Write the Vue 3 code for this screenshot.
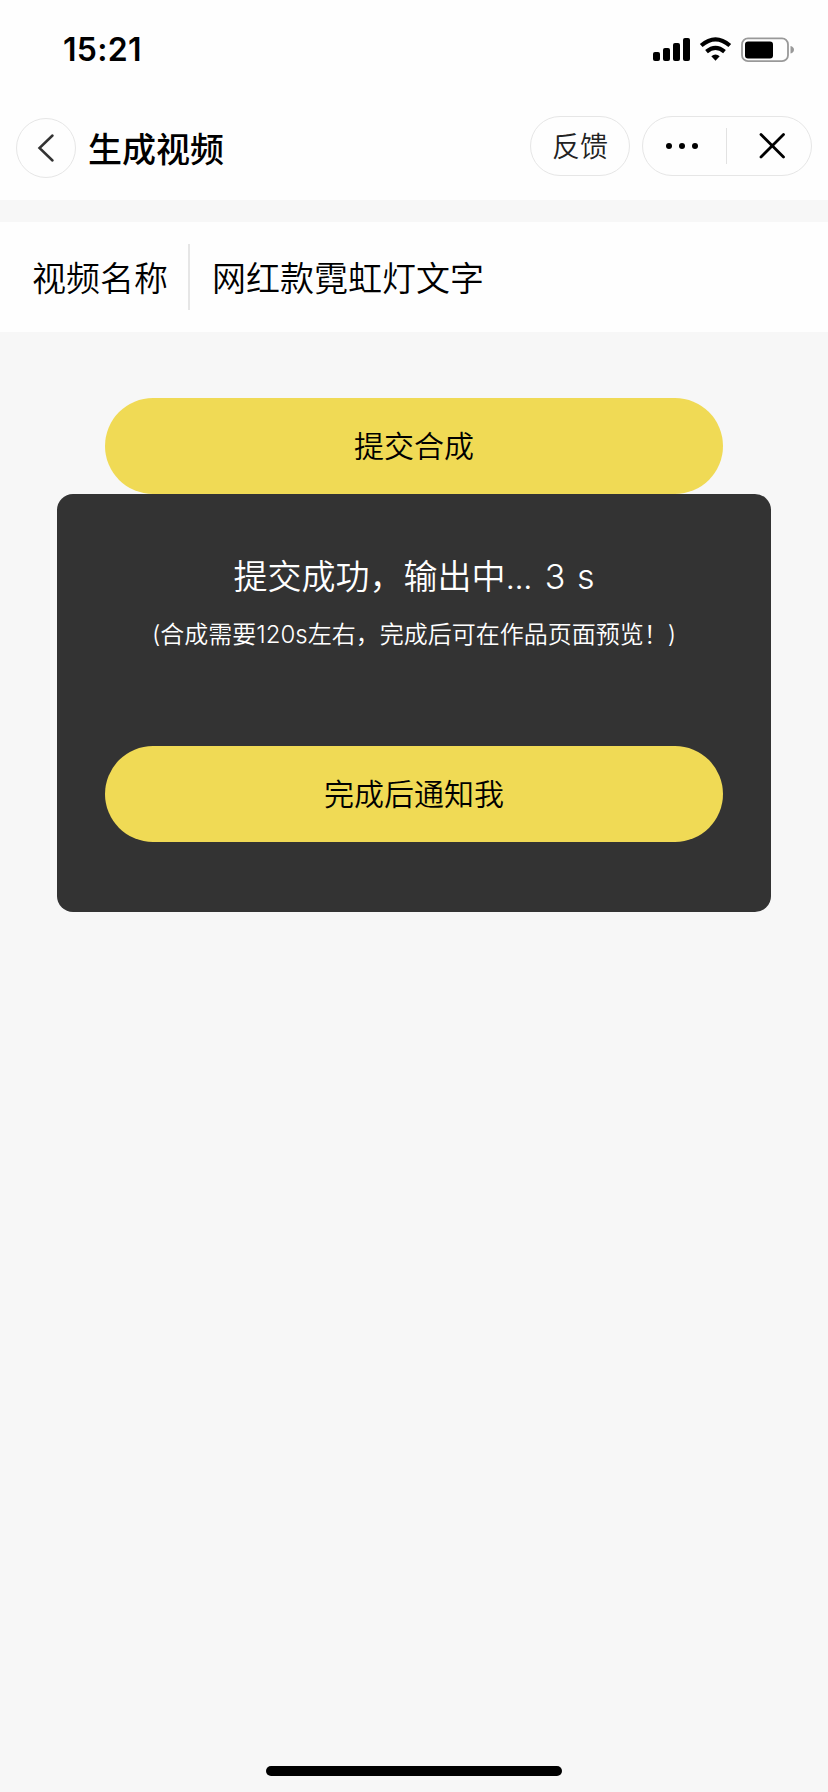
<script setup>
import { ref } from 'vue'

const videoName = ref('网红款霓虹灯文字')
const seconds = ref(3)
</script>

<template>
  <div class="screen">
    <header class="top">
      <div class="status">
        <span class="time">15:21</span>
        <svg class="indicators" width="144" height="26" viewBox="0 0 144 26">
          <rect x="1" y="15" width="7" height="9" rx="2" />
          <rect x="11" y="11" width="7" height="13" rx="2" />
          <rect x="21" y="6" width="7" height="18" rx="2" />
          <rect x="31" y="1" width="7" height="23" rx="2" />
          <g fill="none" stroke="#000" stroke-width="4.2">
            <path d="M49.200 8.500Q63.500 -3.800 77.800 8.500" />
            <path d="M54.500 14.600Q63.500 7.100 72.500 14.600" />
          </g>
          <path d="M59.300 19.200Q63.500 15.700 67.700 19.200L63.500 23.700Z" />
          <rect x="90" y="1.400" width="46" height="22.800" rx="6" fill="none" stroke="#999" stroke-width="1.800" />
          <rect x="93" y="4.500" width="28" height="17" rx="3" />
          <path d="M138.500 9Q142 10 142 12.800T138.500 16.600Z" fill="#999" />
        </svg>
      </div>
      <nav class="nav">
        <button class="back" aria-label="返回">
          <svg width="58" height="58" viewBox="0 0 58 58">
            <path d="M35.500 16.500L22.500 29L35.500 41.500" fill="none" stroke="#333" stroke-width="2.500" stroke-linecap="round" />
          </svg>
        </button>
        <h1>生成视频</h1>
        <button class="feedback">反馈</button>
        <div class="capsule">
          <svg width="167" height="58" viewBox="0 0 167 58">
            <circle cx="26" cy="29" r="3" />
            <circle cx="39" cy="29" r="3" />
            <circle cx="52" cy="29" r="3" />
            <path d="M83.500 11V47" stroke="#e2e2e2" stroke-width="1" />
            <path d="M118 17.500L140.500 40M140.500 17.500L118 40" stroke="#000" stroke-width="2.800" stroke-linecap="round" />
          </svg>
        </div>
      </nav>
    </header>

    <section class="field">
      <span class="label">视频名称</span>
      <span class="value">{{ videoName }}</span>
    </section>

    <main class="content">
      <button class="primary">提交合成</button>
      <section class="dialog">
        <p class="message">提交成功，输出中<span class="dots">...</span><span class="count">{{ seconds }} s</span></p>
        <p class="hint">(合成需要120s左右，完成后可在作品页面预览！)</p>
        <button class="primary">完成后通知我</button>
      </section>
    </main>

    <div class="home"></div>
  </div>
</template>

<style>
body {
  margin: 0;
  background: #f7f7f7;
}
</style>

<style scoped>
.screen {
  box-sizing: border-box;
  width: 828px;
  height: 1792px;
  display: flex;
  flex-direction: column;
  background: #f7f7f7;
  color: #000;
  font-family: Inter, "Noto Sans CJK SC", sans-serif;
}
button {
  margin: 0;
  padding: 0;
  border: 0;
  background: none;
  color: inherit;
  font: inherit;
}
svg {
  display: block;
}
h1,
p {
  margin: 0;
}
.top {
  height: 200px;
  background: #fefefe;
}
.status {
  height: 100px;
  display: flex;
  justify-content: space-between;
  padding: 0 32px 0 63px;
  box-sizing: border-box;
}
.time {
  line-height: 100px;
  font-size: 32px;
  font-weight: 600;
  letter-spacing: 0.3px;
}
.indicators {
  margin-top: 37px;
}
.nav {
  display: flex;
  align-items: flex-start;
  padding: 16px 16px 0 16px;
}
.back {
  box-sizing: border-box;
  width: 60px;
  height: 60px;
  border: 1px solid #e6e6e6;
  border-radius: 50%;
  margin-top: 2px;
}
h1 {
  flex: 1;
  margin: 4px 0 0 12px;
  font-size: 34px;
  line-height: 60px;
  font-weight: 500;
}
.feedback {
  box-sizing: border-box;
  width: 100px;
  height: 60px;
  border: 1px solid #e6e6e6;
  border-radius: 30px;
  font-size: 28px;
  font-weight: 350;
  line-height: 60px;
  color: #222;
}
.capsule {
  box-sizing: border-box;
  width: 170px;
  height: 60px;
  margin-left: 12px;
  border: 1px solid #e6e6e6;
  border-radius: 30px;
}
.field {
  height: 110px;
  margin-top: 22px;
  display: flex;
  align-items: center;
  background: #fefefe;
  font-size: 34px;
  font-weight: 350;
}
.label {
  width: 156px;
  height: 66px;
  padding-left: 32px;
  border-right: 2px solid #e6e6e6;
}
.label,
.value {
  line-height: 70px;
}
.value {
  height: 66px;
  padding-left: 22px;
}
.content {
  flex: 1;
  padding: 66px 57px 0;
  display: flex;
  flex-direction: column;
  align-items: center;
}
.primary {
  width: 618px;
  height: 96px;
  padding-bottom: 1px;
  border-radius: 48px;
  background: #f0da55;
  font-size: 30px;
  font-weight: 350;
  line-height: 94px;
}
.dialog {
  box-sizing: border-box;
  width: 714px;
  height: 418px;
  padding-top: 53px;
  display: flex;
  flex-direction: column;
  align-items: center;
  border-radius: 16px;
  background: #333;
  color: #fff;
}
.dialog .primary {
  margin-top: 87px;
  color: #000;
}
.message {
  font-size: 34px;
  line-height: 60px;
  font-weight: 350;
}
.dots {
  letter-spacing: -0.8px;
}
.count {
  margin-left: 13px;
  word-spacing: 2px;
}
.hint {
  margin-top: 4px;
  font-size: 24px;
  line-height: 48px;
  font-weight: 350;
}
.home {
  width: 296px;
  height: 10px;
  margin: 0 auto 16px 266px;
  border-radius: 5px;
  background: #000;
}
</style>
